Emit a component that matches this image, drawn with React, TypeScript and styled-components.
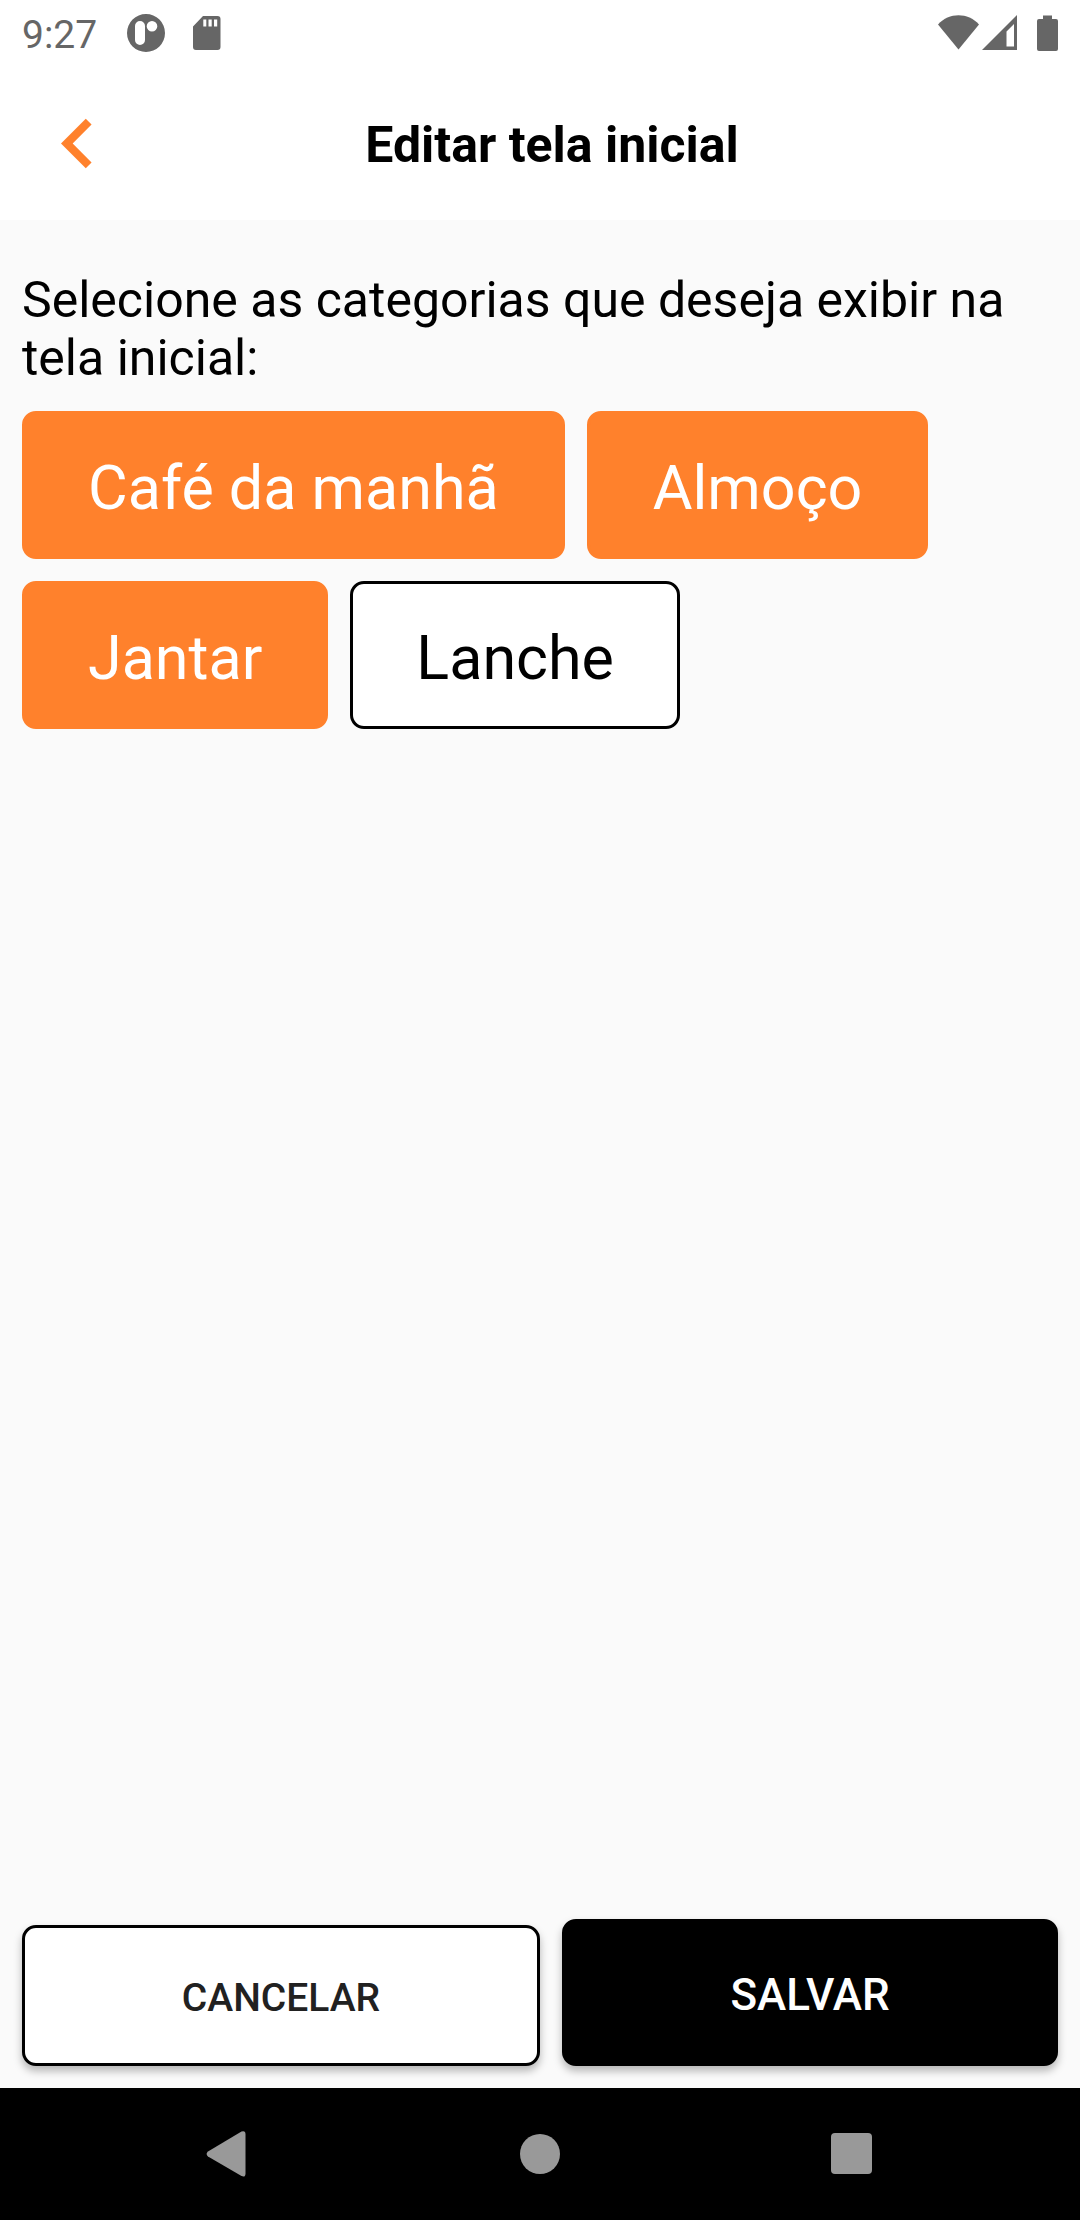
import React, { useState } from "react";
import styled, { createGlobalStyle, css } from "styled-components";

const color = {
  accent: "#ff812c",
  ink: "#000000",
  buttonInk: "#212121",
  surface: "#ffffff",
  background: "#fafafa",
  status: "#666666",
  nav: "#999999",
};

const GlobalStyle = createGlobalStyle`
  *, *::before, *::after { box-sizing: border-box; }
  body {
    margin: 0;
    background: ${color.background};
    font-family: Roboto, "Noto Sans", sans-serif;
    color: ${color.ink};
  }
  button { font-family: inherit; cursor: pointer; }
`;

const Screen = styled.div`
  display: flex;
  flex-direction: column;
  min-height: 100vh;
`;

const StatusBar = styled.div`
  display: flex;
  align-items: center;
  height: 66px;
  padding: 0 22px;
  background: ${color.surface};
  color: ${color.status};
`;

const Clock = styled.time`
  font-size: 39px;
  line-height: 46px;
  padding-top: 4px;
`;

const StatusIcons = styled.div<{ $end?: boolean }>`
  display: flex;
  align-items: center;
  ${(p) =>
    p.$end
      ? css`
          margin-left: auto;
        `
      : css`
          gap: 28px;
          margin-left: 30px;
        `}
  svg {
    display: block;
    fill: currentColor;
  }
`;

const Header = styled.header`
  display: flex;
  align-items: center;
  height: 154px;
  padding-right: 130px;
  background: ${color.surface};
`;

const BackButton = styled.button`
  display: grid;
  place-items: center;
  flex: none;
  width: 154px;
  height: 154px;
  padding: 0;
  border: 0;
  background: none;
  color: ${color.accent};
`;

const Title = styled.h1`
  flex: 1;
  margin: 0;
  padding-top: 4px;
  font-size: 50px;
  line-height: 58px;
  font-weight: 700;
  text-align: center;
`;

const Content = styled.main`
  flex: 1;
  padding: 51px 22px 22px;
`;

const Categories = styled.fieldset`
  min-width: 0;
  margin: 0;
  padding: 0;
  border: 0;
`;

const Prompt = styled.legend`
  padding: 0;
  font-size: 50px;
  line-height: 58px;
`;

const ChipList = styled.div`
  display: flex;
  flex-wrap: wrap;
  gap: 22px;
  padding-top: 24px;
`;

const ChipInput = styled.input`
  position: absolute;
  width: 1px;
  height: 1px;
  margin: 0;
  opacity: 0;
`;

const Chip = styled.label<{ $selected: boolean }>`
  position: relative;
  display: flex;
  align-items: center;
  height: 148px;
  padding: 6px 63px 0;
  border: 3px solid ${(p) => (p.$selected ? color.accent : color.ink)};
  border-radius: 14px;
  background: ${(p) => (p.$selected ? color.accent : color.surface)};
  color: ${(p) => (p.$selected ? color.surface : color.ink)};
  font-size: 61px;
  line-height: 72px;
  cursor: pointer;
`;

const Actions = styled.footer`
  display: grid;
  grid-template-columns: 47fr 45fr;
  align-items: end;
  gap: 22px;
  padding: 0 22px 22px;
`;

const ActionButton = styled.button<{ $primary?: boolean }>`
  height: ${(p) => (p.$primary ? 147 : 141)}px;
  padding: 4px 0 0;
  border: 3px solid ${color.ink};
  border-radius: 14px;
  background: ${(p) => (p.$primary ? color.ink : color.surface)};
  color: ${(p) => (p.$primary ? color.surface : color.buttonInk)};
  font-size: ${(p) => (p.$primary ? 44 : 39)}px;
  line-height: 52px;
  font-weight: 500;
  text-transform: uppercase;
  box-shadow: 0 5px 8px rgba(0, 0, 0, 0.28);
`;

const NavBar = styled.nav`
  display: flex;
  justify-content: center;
  align-items: center;
  gap: 180px;
  height: 132px;
  background: ${color.ink};
`;

const NavButton = styled.button`
  display: grid;
  place-items: center;
  width: 132px;
  height: 132px;
  padding: 0;
  border: 0;
  background: none;
  color: ${color.nav};
`;

const categoryNames = ["Café da manhã", "Almoço", "Jantar", "Lanche"];

export default function App() {
  const [selected, setSelected] = useState<string[]>(["Café da manhã", "Almoço", "Jantar"]);

  const toggle = (name: string) =>
    setSelected((now) => (now.includes(name) ? now.filter((n) => n !== name) : [...now, name]));

  return (
    <Screen>
      <GlobalStyle />
      <StatusBar>
        <Clock>9:27</Clock>
        <StatusIcons>
          <svg width="38" height="38" viewBox="0 0 38 38" aria-hidden="true">
            <path
              fillRule="evenodd"
              d="M19 0a19 19 0 1 1 0 38a19 19 0 1 1 0-38zM13 7a5 5 0 0 0-5 5v14a5 5 0 0 0 10 0V12a5 5 0 0 0-5-5zM25 7a5.3 5.3 0 1 0 0 10.600a5.300 5.300 0 1 0 0-10.600z"
            />
          </svg>
          <svg width="28" height="34" viewBox="0 0 28 34" aria-hidden="true">
            <path
              fillRule="evenodd"
              d="M10 0h14.500a3 3 0 0 1 3 3v28a3 3 0 0 1-3 3h-21.500a3 3 0 0 1-3-3V10.500zM10.300 3.500v7h3v-7zM15.500 3.500v7h3.200v-7zM21 3.500v7h3.200v-7z"
            />
          </svg>
        </StatusIcons>
        <StatusIcons $end>
          <svg width="120" height="36" viewBox="0 0 120 36" aria-hidden="true">
            <path d="M0 9.500C11-2.800 30-2.800 41 9.500L20.500 34.500z" />
            <path fillRule="evenodd" d="M79 0v35H44zM76 9L68.500 16.500V31.500H76z" />
            <path d="M105 0.500h9v3.500h4a2 2 0 0 1 2 2v28a2 2 0 0 1-2 2h-17a2 2 0 0 1-2-2v-28a2 2 0 0 1 2-2h4z" />
          </svg>
        </StatusIcons>
      </StatusBar>

      <Header>
        <BackButton type="button" aria-label="Voltar">
          <svg width="99" height="99" viewBox="0 0 24 24" fill="currentColor" aria-hidden="true">
            <path d="M15.410 7.410L14 6l-6 6 6 6 1.410-1.410L10.830 12z" />
          </svg>
        </BackButton>
        <Title>Editar tela inicial</Title>
      </Header>

      <Content>
        <Categories>
          <Prompt>Selecione as categorias que deseja exibir na tela inicial:</Prompt>
          <ChipList>
            {categoryNames.map((name) => (
              <Chip key={name} $selected={selected.includes(name)}>
                <ChipInput
                  type="checkbox"
                  checked={selected.includes(name)}
                  onChange={() => toggle(name)}
                />
                {name}
              </Chip>
            ))}
          </ChipList>
        </Categories>
      </Content>

      <Actions>
        <ActionButton type="button">Cancelar</ActionButton>
        <ActionButton type="button" $primary>
          Salvar
        </ActionButton>
      </Actions>

      <NavBar>
        <NavButton type="button" aria-label="Voltar">
          <svg width="44" height="46" viewBox="0 0 44 46" fill="currentColor" aria-hidden="true">
            <path d="M35.500 0.600Q39.500-0.800 39.500 3.500V42.500Q39.500 46.800 35.500 45.100L2 25.500Q-0.800 23 2 20.500z" />
          </svg>
        </NavButton>
        <NavButton type="button" aria-label="Início">
          <svg width="40" height="40" viewBox="0 0 40 40" fill="currentColor" aria-hidden="true">
            <circle cx="20" cy="20" r="20" />
          </svg>
        </NavButton>
        <NavButton type="button" aria-label="Recentes">
          <svg width="42" height="42" viewBox="0 0 42 42" fill="currentColor" aria-hidden="true">
            <rect width="41" height="41" rx="4" />
          </svg>
        </NavButton>
      </NavBar>
    </Screen>
  );
}
